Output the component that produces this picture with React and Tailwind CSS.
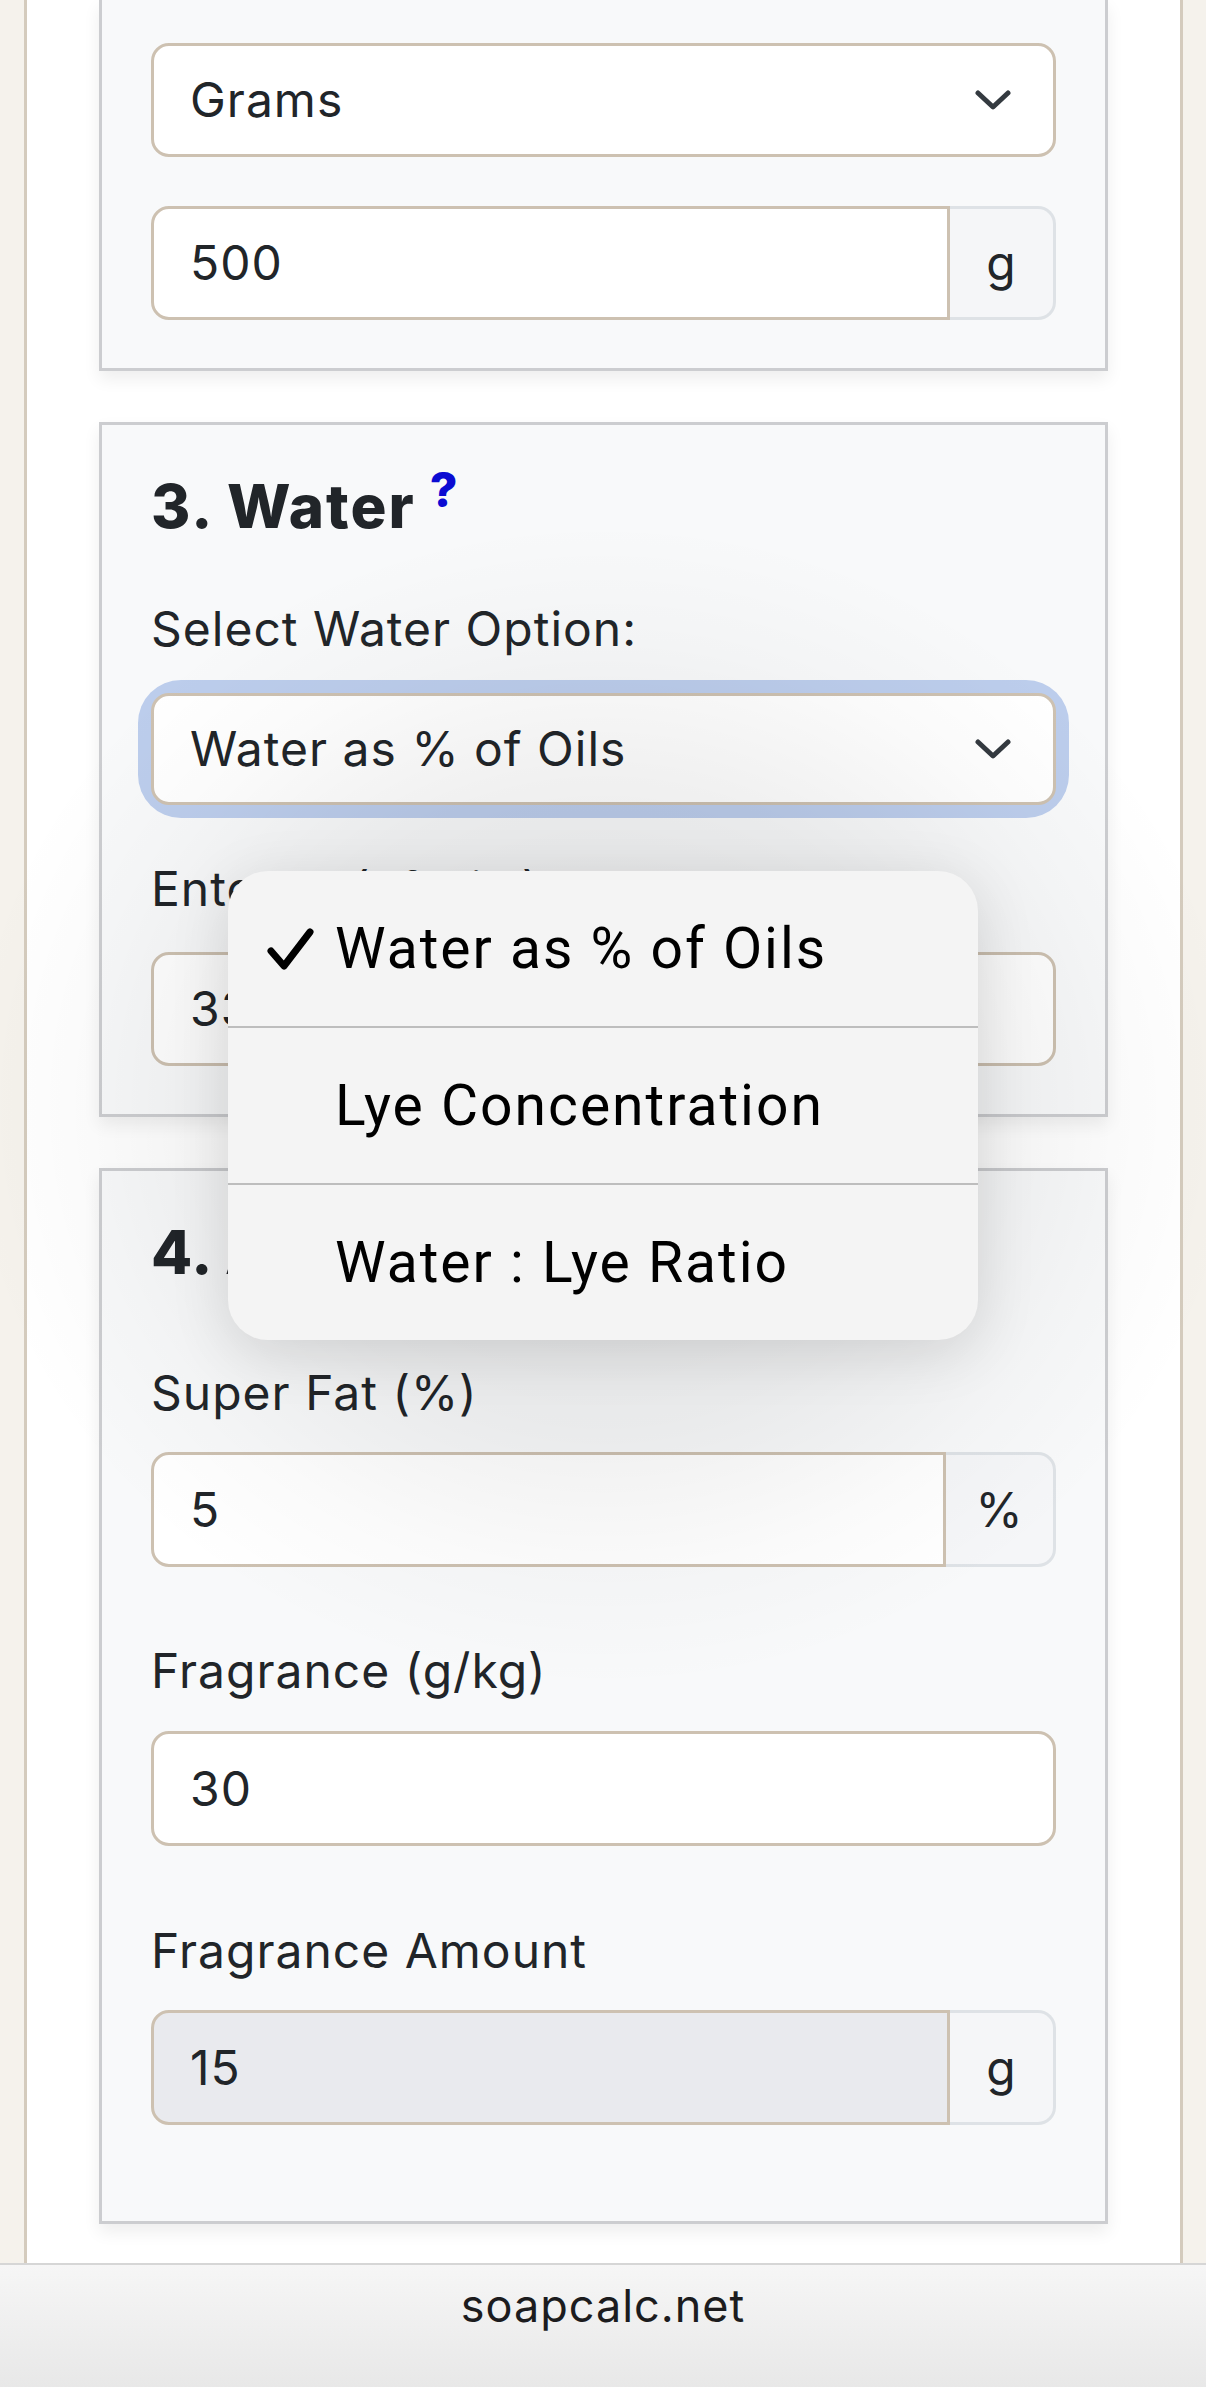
const Chevron = () => (
  <svg width="36" height="22" viewBox="0 0 36 22" className="absolute right-[42px] top-1/2 -translate-y-1/2">
    <path d="M3 4 L18 18 L33 4" fill="none" stroke="#343a40" strokeWidth="5" strokeLinecap="round" strokeLinejoin="round" />
  </svg>
);

function Select({ value, focused }) {
  return (
    <div className={focused ? "rounded-[30px] shadow-[0_0_0_13px_#bccdec]" : ""}>
      <div className="relative flex h-[112px] items-center rounded-[18px] border-[3px] border-[#cdc1b1] bg-white px-[36px] text-[48px]">
        {value}
        <Chevron />
      </div>
    </div>
  );
}

function Field({ value, unit, unitWidth = "w-[106px]", disabled }) {
  return (
    <div className="flex h-[115px]">
      <div
        className={
          "flex flex-1 items-center border-[3px] border-[#cdc1b1] px-[36px] text-[48px] " +
          (unit ? "rounded-l-[18px] " : "rounded-[18px] ") +
          (disabled ? "bg-[#e9eaee]" : "bg-white")
        }
      >
        {value}
      </div>
      {unit && (
        <div className={"flex items-center justify-center rounded-r-[18px] border-[3px] border-l-0 border-[#dee2e6] bg-[#f5f6f8] text-[48px] " + unitWidth}>
          {unit}
        </div>
      )}
    </div>
  );
}

const Label = ({ children, className = "" }) => (
  <div className={"text-[48px] leading-[72px] " + className}>{children}</div>
);

function MenuRow({ children, checked }) {
  return (
    <div className="relative flex h-[155px] items-center pl-[107px] text-[57px] tracking-[2px] text-black">
      {checked && (
        <svg width="50" height="44" viewBox="0 0 50 44" className="absolute left-[37px] top-1/2 -translate-y-1/2">
          <path d="M6 24 L19 39 L45 5" fill="none" stroke="#000" strokeWidth="7" strokeLinecap="round" strokeLinejoin="round" />
        </svg>
      )}
      {children}
    </div>
  );
}

export default function App() {
  return (
    <div className="relative h-[2387px] w-[1206px] overflow-hidden bg-[#f5f2ec] font-[Inter,sans-serif] tracking-[1px] text-[#212529]">
      <div className="ml-[24px] mr-[23px] h-[2263px] overflow-hidden border-x-[3px] border-[#d4cbbd] bg-white px-[72px]">
        {/* 2. oils weight (top cut off) */}
        <div className="border-[3px] border-t-0 border-[#cccdd0] bg-[#f8f9fa] px-[49px] pb-[48px] pt-[43px] shadow-[0_8px_16px_rgba(0,0,0,0.07)]">
          <div className="mb-[49px]">
            <div className="relative flex h-[114px] items-center rounded-[18px] border-[3px] border-[#cdc1b1] bg-white px-[36px] text-[48px]">
              Grams
              <Chevron />
            </div>
          </div>
          <div className="[&>div]:h-[114px]">
            <Field value="500" unit="g" />
          </div>
        </div>

        {/* 3. water */}
        <div className="mt-[51px] border-[3px] border-[#cccdd0] bg-[#f8f9fa] px-[49px] pb-[48px] pt-[45px] shadow-[0_8px_16px_rgba(0,0,0,0.07)]">
          <div className="mb-[51px] flex items-start">
            <h2 className="text-[60px] font-extrabold leading-[72px] tracking-[2px]">3. Water</h2>
            <span className="ml-[14px] mt-[-4px] text-[48px] font-extrabold leading-[48px] text-[#0b0bd2]">?</span>
          </div>
          <Label className="mb-[28px]">Select Water Option:</Label>
          <Select value="Water as % of Oils" focused />
          <Label className="mb-[27px] mt-[48px]">Enter % (of Oils)</Label>
          <div className="[&>div]:h-[114px]">
            <Field value="33" />
          </div>
        </div>

        {/* 4. additives */}
        <div className="mt-[51px] border-[3px] border-[#cccdd0] bg-[#f8f9fa] px-[49px] pb-[96px] pt-[45px] shadow-[0_8px_16px_rgba(0,0,0,0.07)]">
          <h2 className="mb-[69px] text-[60px] font-extrabold leading-[72px] tracking-[1px]">4. Additives</h2>
          <Label className="mb-[23px]">Super Fat (%)</Label>
          <Field value="5" unit="%" unitWidth="w-[110px]" />
          <Label className="mb-[24px] mt-[68px]">Fragrance (g/kg)</Label>
          <Field value="30" />
          <Label className="mb-[23px] mt-[69px]">Fragrance Amount</Label>
          <Field value="15" unit="g" disabled />
        </div>
      </div>

      {/* browser address bar */}
      <div className="flex h-[124px] justify-center border-t-[2px] border-[#d6d6d6] bg-[linear-gradient(180deg,#f6f6f6,#e8e8e8)] pt-[15px]">
        <span className="text-[45px] leading-[52px] tracking-[1px] text-[#1c1c1e]">soapcalc.net</span>
      </div>

      {/* dim cast by the native popup */}
      <div className="pointer-events-none absolute left-[-40px] top-[520px] h-[1170px] w-[1286px] bg-[radial-gradient(closest-side,rgba(0,0,0,0.11),rgba(0,0,0,0.06)_55%,rgba(0,0,0,0.02)_80%,transparent)]" />

      {/* native select popup */}
      <div className="absolute left-[228px] top-[871px] w-[750px] overflow-hidden rounded-[40px] bg-[#f4f4f4] font-[Roboto,sans-serif] shadow-[0_12px_60px_rgba(0,0,0,0.12)]">
        <MenuRow checked>Water as % of Oils</MenuRow>
        <div className="h-[2px] bg-[#bdbdbd]" />
        <MenuRow>Lye Concentration</MenuRow>
        <div className="h-[2px] bg-[#bdbdbd]" />
        <MenuRow>Water : Lye Ratio</MenuRow>
      </div>
    </div>
  );
}
